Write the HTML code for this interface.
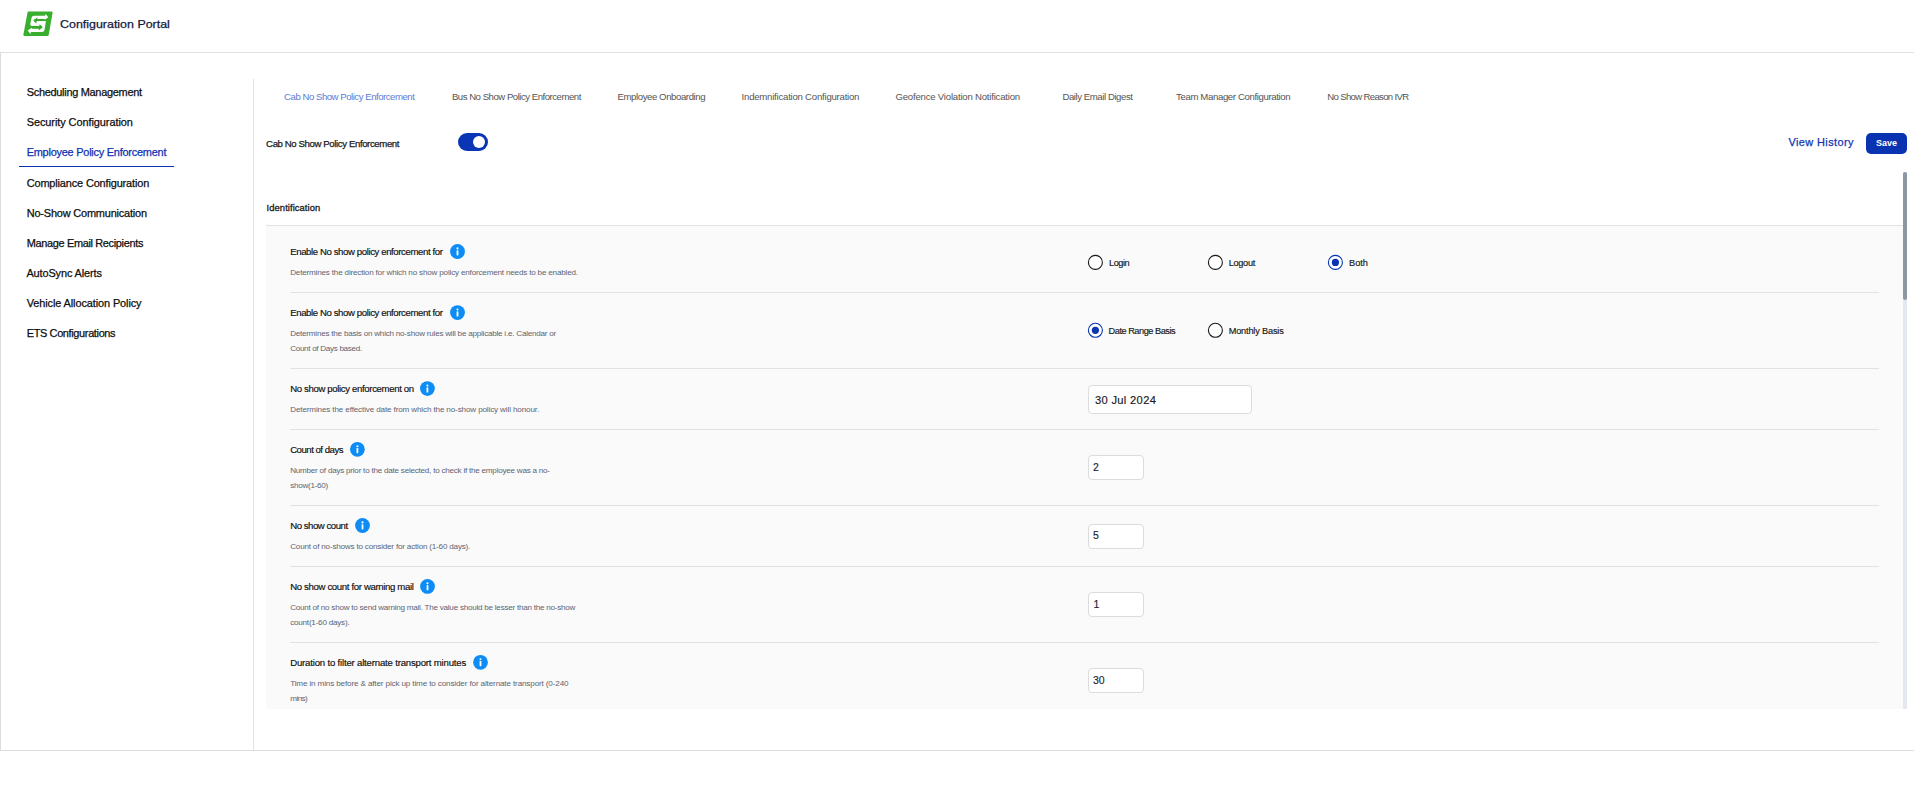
<!DOCTYPE html>
<html><head><meta charset="utf-8"><title>Configuration Portal</title>
<style>
html,body{margin:0;padding:0;background:#fff;width:1914px;height:810px;overflow:hidden;font-family:"Liberation Sans", sans-serif;}
.t{position:absolute;white-space:pre;font-family:"Liberation Sans", sans-serif;}
.a{position:absolute;box-sizing:border-box;}
</style></head><body>
<!-- header border -->
<div class="a" style="left:0;top:52px;width:1914px;height:1px;background:#e0e0e0"></div>
<!-- container left border & bottom border -->
<div class="a" style="left:0;top:52px;width:1px;height:699px;background:#dcdcdc"></div>
<div class="a" style="left:0;top:750px;width:1914px;height:1px;background:#dedede"></div>
<!-- sidebar divider -->
<div class="a" style="left:253px;top:79px;width:1px;height:671px;background:#e2e2e2"></div>
<!-- active underline -->
<div class="a" style="left:19px;top:166px;width:155px;height:1px;background:#0b33b2"></div>
<!-- logo -->
<svg class="a" style="left:20px;top:8px" width="38" height="32" viewBox="20 8 38 32">
  <polygon points="28.7,12.8 51.4,12.8 47.5,34.8 24.6,34.8" fill="#3aae2e" stroke="#3aae2e" stroke-width="2.4" stroke-linejoin="round"/>
  <path d="M34.2,15.8 L45.16,15.8 L45.5,13.9 L48.3,17.3 L44.4,20.0 L44.56,19.1 L34.6,19.1 L34.3,21.1 L45.9,21.1 L44.5,30.0 Q44.2,32.1 42.1,32.1 L30.89,32.1 L30.5,34.0 L27.7,30.5 L31.8,27.7 L31.61,28.6 L41.0,28.6 L41.4,26.1 L32.2,26.1 Q30.0,26.1 30.3,24.0 L31.4,18.2 Q31.9,15.8 34.2,15.8 Z" fill="#fff"/>
  <polygon points="33.2,20.4 37.6,17.3 37.1,19.1 44.3,19.1 44.2,21.1 36.7,21.1 36.3,23.6" fill="#34aa28"/>
  <polygon points="42.8,27.3 39.7,24.2 39.3,26.1 32.5,26.1 32.3,28.6 38.9,28.6 38.5,30.5" fill="#34aa28"/>
</svg>
<!-- toggle -->
<div class="a" style="left:458px;top:133px;width:30px;height:18px;border-radius:9px;background:#0a35b4"></div>
<div class="a" style="left:473px;top:136px;width:12px;height:12px;border-radius:50%;background:#fff"></div>
<!-- save button -->
<div class="a" style="left:1866px;top:133px;width:41px;height:21px;border-radius:5px;background:#0a33b1"></div>
<!-- identification top border -->
<div class="a" style="left:266px;top:225px;width:1637px;height:1px;background:#e2e2e2"></div>
<!-- panel -->
<div class="a" style="left:266px;top:226px;width:1637px;height:483px;background:#fafafa"></div>
<!-- separators -->
<div class="a" style="left:290px;top:292px;width:1589px;height:1px;background:#e2e2e2"></div>
<div class="a" style="left:290px;top:368px;width:1589px;height:1px;background:#e2e2e2"></div>
<div class="a" style="left:290px;top:429px;width:1589px;height:1px;background:#e2e2e2"></div>
<div class="a" style="left:290px;top:505px;width:1589px;height:1px;background:#e2e2e2"></div>
<div class="a" style="left:290px;top:566px;width:1589px;height:1px;background:#e2e2e2"></div>
<div class="a" style="left:290px;top:642px;width:1589px;height:1px;background:#e2e2e2"></div>
<!-- scrollbar -->
<div class="a" style="left:1903px;top:172px;width:4px;height:537px;background:#e5e9ef"></div>
<div class="a" style="left:1903px;top:172px;width:4px;height:128px;border-radius:2px;background:#8d97a4"></div>
<!-- info icons -->
<svg class="a" style="left:0;top:0" width="1914" height="810">
  
  <g transform="translate(457.5,251.5)"><circle cx="0" cy="0" r="7.4" fill="#0d8cf5"/><circle cx="0" cy="-3.1" r="1.05" fill="#fff"/><rect x="-0.9" y="-1.3" width="1.8" height="5.2" rx="0.6" fill="#fff"/></g>
  <g transform="translate(457.5,312.6)"><circle cx="0" cy="0" r="7.4" fill="#0d8cf5"/><circle cx="0" cy="-3.1" r="1.05" fill="#fff"/><rect x="-0.9" y="-1.3" width="1.8" height="5.2" rx="0.6" fill="#fff"/></g>
  <g transform="translate(427.4,388.6)"><circle cx="0" cy="0" r="7.4" fill="#0d8cf5"/><circle cx="0" cy="-3.1" r="1.05" fill="#fff"/><rect x="-0.9" y="-1.3" width="1.8" height="5.2" rx="0.6" fill="#fff"/></g>
  <g transform="translate(357.4,449.3)"><circle cx="0" cy="0" r="7.4" fill="#0d8cf5"/><circle cx="0" cy="-3.1" r="1.05" fill="#fff"/><rect x="-0.9" y="-1.3" width="1.8" height="5.2" rx="0.6" fill="#fff"/></g>
  <g transform="translate(362.5,525.5)"><circle cx="0" cy="0" r="7.4" fill="#0d8cf5"/><circle cx="0" cy="-3.1" r="1.05" fill="#fff"/><rect x="-0.9" y="-1.3" width="1.8" height="5.2" rx="0.6" fill="#fff"/></g>
  <g transform="translate(427.5,586.4)"><circle cx="0" cy="0" r="7.4" fill="#0d8cf5"/><circle cx="0" cy="-3.1" r="1.05" fill="#fff"/><rect x="-0.9" y="-1.3" width="1.8" height="5.2" rx="0.6" fill="#fff"/></g>
  <g transform="translate(480.5,662.3)"><circle cx="0" cy="0" r="7.4" fill="#0d8cf5"/><circle cx="0" cy="-3.1" r="1.05" fill="#fff"/><rect x="-0.9" y="-1.3" width="1.8" height="5.2" rx="0.6" fill="#fff"/></g>
  <!-- radios -->
  <circle cx="1095.4" cy="262.4" r="7" fill="#fff" stroke="#1a1a1a" stroke-width="1.1"/>
  <circle cx="1215.4" cy="262.4" r="7" fill="#fff" stroke="#1a1a1a" stroke-width="1.1"/>
  <circle cx="1335.4" cy="262.4" r="7" fill="#fff" stroke="#0a34b2" stroke-width="1.1"/>
  <circle cx="1335.4" cy="262.4" r="3.6" fill="#0a34b2"/>
  <circle cx="1095.4" cy="330.3" r="7" fill="#fff" stroke="#0a34b2" stroke-width="1.1"/>
  <circle cx="1095.4" cy="330.3" r="3.6" fill="#0a34b2"/>
  <circle cx="1215.4" cy="330.3" r="7" fill="#fff" stroke="#1a1a1a" stroke-width="1.1"/>
</svg>
<!-- inputs -->
<div class="a" style="left:1088px;top:385px;width:164px;height:29px;border:1px solid #dcdcdc;border-radius:4px;background:#fff"></div>
<div class="a" style="left:1088px;top:455px;width:56px;height:25px;border:1px solid #dcdcdc;border-radius:4px;background:#fff"></div>
<div class="a" style="left:1088px;top:524px;width:56px;height:25px;border:1px solid #dcdcdc;border-radius:4px;background:#fff"></div>
<div class="a" style="left:1088px;top:592px;width:56px;height:25px;border:1px solid #dcdcdc;border-radius:4px;background:#fff"></div>
<div class="a" style="left:1088px;top:668px;width:56px;height:25px;border:1px solid #dcdcdc;border-radius:4px;background:#fff"></div>

<span class="t" style="left:59.50px;top:18.80px;font-size:10.95px;line-height:10.95px;color:#141a3c;transform:scaleX(1.1367);transform-origin:0 0;-webkit-text-stroke:0.25px currentColor;">Configuration Portal</span>
<span class="t" style="left:26.70px;top:86.60px;font-size:10.95px;line-height:10.95px;color:#0d0d0d;letter-spacing:-0.283px;-webkit-text-stroke:0.25px currentColor;">Scheduling Management</span>
<span class="t" style="left:26.70px;top:116.60px;font-size:10.95px;line-height:10.95px;color:#0d0d0d;letter-spacing:-0.068px;-webkit-text-stroke:0.25px currentColor;">Security Configuration</span>
<span class="t" style="left:26.70px;top:146.90px;font-size:10.95px;line-height:10.95px;color:#0d32b2;letter-spacing:-0.237px;-webkit-text-stroke:0.25px currentColor;">Employee Policy Enforcement</span>
<span class="t" style="left:26.70px;top:177.90px;font-size:10.95px;line-height:10.95px;color:#0d0d0d;letter-spacing:-0.142px;-webkit-text-stroke:0.25px currentColor;">Compliance Configuration</span>
<span class="t" style="left:26.70px;top:207.70px;font-size:10.95px;line-height:10.95px;color:#0d0d0d;letter-spacing:-0.181px;-webkit-text-stroke:0.25px currentColor;">No-Show Communication</span>
<span class="t" style="left:26.70px;top:237.70px;font-size:10.95px;line-height:10.95px;color:#0d0d0d;letter-spacing:-0.334px;-webkit-text-stroke:0.25px currentColor;">Manage Email Recipients</span>
<span class="t" style="left:26.40px;top:267.90px;font-size:10.95px;line-height:10.95px;color:#0d0d0d;letter-spacing:-0.117px;-webkit-text-stroke:0.25px currentColor;">AutoSync Alerts</span>
<span class="t" style="left:26.70px;top:297.70px;font-size:10.95px;line-height:10.95px;color:#0d0d0d;letter-spacing:-0.103px;-webkit-text-stroke:0.25px currentColor;">Vehicle Allocation Policy</span>
<span class="t" style="left:26.70px;top:327.70px;font-size:10.95px;line-height:10.95px;color:#0d0d0d;letter-spacing:-0.351px;-webkit-text-stroke:0.25px currentColor;">ETS Configurations</span>
<span class="t" style="left:284.10px;top:91.90px;font-size:9.6px;line-height:9.6px;color:#5a7bd6;letter-spacing:-0.474px;">Cab No Show Policy Enforcement</span>
<span class="t" style="left:451.90px;top:91.90px;font-size:9.6px;line-height:9.6px;color:#555555;letter-spacing:-0.482px;">Bus No Show Policy Enforcement</span>
<span class="t" style="left:617.50px;top:91.90px;font-size:9.6px;line-height:9.6px;color:#555555;letter-spacing:-0.413px;">Employee Onboarding</span>
<span class="t" style="left:741.60px;top:91.90px;font-size:9.6px;line-height:9.6px;color:#555555;letter-spacing:-0.229px;">Indemnification Configuration</span>
<span class="t" style="left:895.50px;top:91.90px;font-size:9.6px;line-height:9.6px;color:#555555;letter-spacing:-0.213px;">Geofence Violation Notification</span>
<span class="t" style="left:1062.40px;top:91.90px;font-size:9.6px;line-height:9.6px;color:#555555;letter-spacing:-0.428px;">Daily Email Digest</span>
<span class="t" style="left:1176.10px;top:91.90px;font-size:9.6px;line-height:9.6px;color:#555555;letter-spacing:-0.371px;">Team Manager Configuration</span>
<span class="t" style="left:1327.30px;top:91.90px;font-size:9.6px;line-height:9.6px;color:#555555;letter-spacing:-0.676px;">No Show Reason IVR</span>
<span class="t" style="left:266.10px;top:138.80px;font-size:9.6px;line-height:9.6px;color:#1a1a1a;letter-spacing:-0.384px;-webkit-text-stroke:0.25px #1a1a1a;">Cab No Show Policy Enforcement</span>
<span class="t" style="left:1788.40px;top:136.80px;font-size:10.95px;line-height:10.95px;color:#1236b3;letter-spacing:0.417px;-webkit-text-stroke:0.25px currentColor;">View History</span>
<span class="t" style="left:1876.20px;top:138.00px;font-size:9.8px;line-height:9.8px;color:#ffffff;font-weight:700;transform:scaleX(0.9176);transform-origin:0 0;">Save</span>
<span class="t" style="left:266.60px;top:202.80px;font-size:9.4px;line-height:9.4px;color:#1a1a1a;letter-spacing:0.075px;-webkit-text-stroke:0.3px #1a1a1a;">Identification</span>
<span class="t" style="left:290.20px;top:246.90px;font-size:9.6px;line-height:9.6px;color:#0c0c0c;letter-spacing:-0.395px;-webkit-text-stroke:0.15px currentColor;">Enable No show policy enforcement for</span>
<span class="t" style="left:290.20px;top:268.90px;font-size:8.1px;line-height:8.1px;color:#5d6472;letter-spacing:-0.184px;">Determines the direction for which no show policy enforcement needs to be enabled.</span>
<span class="t" style="left:290.20px;top:307.90px;font-size:9.6px;line-height:9.6px;color:#0c0c0c;letter-spacing:-0.395px;-webkit-text-stroke:0.15px currentColor;">Enable No show policy enforcement for</span>
<span class="t" style="left:290.20px;top:329.90px;font-size:8.1px;line-height:8.1px;color:#5d6472;letter-spacing:-0.228px;">Determines the basis on which no-show rules will be applicable i.e. Calendar or</span>
<span class="t" style="left:290.20px;top:344.90px;font-size:8.1px;line-height:8.1px;color:#5d6472;letter-spacing:-0.310px;">Count of Days based.</span>
<span class="t" style="left:290.20px;top:384.00px;font-size:9.6px;line-height:9.6px;color:#0c0c0c;letter-spacing:-0.354px;-webkit-text-stroke:0.15px currentColor;">No show policy enforcement on</span>
<span class="t" style="left:290.20px;top:406.00px;font-size:8.1px;line-height:8.1px;color:#5d6472;letter-spacing:-0.135px;">Determines the effective date from which the no-show policy will honour.</span>
<span class="t" style="left:290.20px;top:444.80px;font-size:9.6px;line-height:9.6px;color:#0c0c0c;letter-spacing:-0.492px;-webkit-text-stroke:0.15px currentColor;">Count of days</span>
<span class="t" style="left:290.20px;top:466.80px;font-size:8.1px;line-height:8.1px;color:#5d6472;letter-spacing:-0.233px;">Number of days prior to the date selected, to check if the employee was a no-</span>
<span class="t" style="left:290.20px;top:481.80px;font-size:8.1px;line-height:8.1px;color:#5d6472;letter-spacing:-0.265px;">show(1-60)</span>
<span class="t" style="left:290.20px;top:520.80px;font-size:9.6px;line-height:9.6px;color:#0c0c0c;letter-spacing:-0.466px;-webkit-text-stroke:0.15px currentColor;">No show count</span>
<span class="t" style="left:290.20px;top:542.80px;font-size:8.1px;line-height:8.1px;color:#5d6472;letter-spacing:-0.195px;">Count of no-shows to consider for action (1-60 days).</span>
<span class="t" style="left:290.20px;top:582.00px;font-size:9.6px;line-height:9.6px;color:#0c0c0c;letter-spacing:-0.349px;-webkit-text-stroke:0.15px currentColor;">No show count for warning mail</span>
<span class="t" style="left:290.20px;top:604.00px;font-size:8.1px;line-height:8.1px;color:#5d6472;letter-spacing:-0.243px;">Count of no show to send warning mail. The value should be lesser than the no-show</span>
<span class="t" style="left:290.20px;top:619.00px;font-size:8.1px;line-height:8.1px;color:#5d6472;letter-spacing:-0.221px;">count(1-60 days).</span>
<span class="t" style="left:290.20px;top:657.80px;font-size:9.6px;line-height:9.6px;color:#0c0c0c;letter-spacing:-0.187px;-webkit-text-stroke:0.15px currentColor;">Duration to filter alternate transport minutes</span>
<span class="t" style="left:290.20px;top:679.80px;font-size:8.1px;line-height:8.1px;color:#5d6472;letter-spacing:-0.135px;">Time in mins before &amp; after pick up time to consider for alternate transport (0-240</span>
<span class="t" style="left:290.20px;top:694.80px;font-size:8.1px;line-height:8.1px;color:#5d6472;letter-spacing:-0.547px;">mins)</span>
<span class="t" style="left:1109.00px;top:258.70px;font-size:9.2px;line-height:9.2px;color:#141414;letter-spacing:-0.443px;-webkit-text-stroke:0.15px currentColor;">Login</span>
<span class="t" style="left:1228.70px;top:258.80px;font-size:9.2px;line-height:9.2px;color:#141414;letter-spacing:-0.310px;-webkit-text-stroke:0.15px currentColor;">Logout</span>
<span class="t" style="left:1349.00px;top:258.80px;font-size:9.2px;line-height:9.2px;color:#141414;letter-spacing:0.003px;-webkit-text-stroke:0.15px currentColor;">Both</span>
<span class="t" style="left:1108.60px;top:326.80px;font-size:9.2px;line-height:9.2px;color:#141414;letter-spacing:-0.471px;-webkit-text-stroke:0.15px currentColor;">Date Range Basis</span>
<span class="t" style="left:1228.70px;top:326.80px;font-size:9.2px;line-height:9.2px;color:#141414;letter-spacing:-0.175px;-webkit-text-stroke:0.15px currentColor;">Monthly Basis</span>
<span class="t" style="left:1094.90px;top:394.90px;font-size:11.2px;line-height:11.2px;color:#1a1a1a;letter-spacing:0.317px;-webkit-text-stroke:0.15px currentColor;">30 Jul 2024</span>
<span class="t" style="left:1093.00px;top:462.00px;font-size:10.5px;line-height:10.5px;color:#1b1f36;-webkit-text-stroke:0.15px currentColor;">2</span>
<span class="t" style="left:1093.00px;top:530.00px;font-size:10.5px;line-height:10.5px;color:#1b1f36;-webkit-text-stroke:0.15px currentColor;">5</span>
<span class="t" style="left:1093.40px;top:599.00px;font-size:10.5px;line-height:10.5px;color:#1b1f36;-webkit-text-stroke:0.15px currentColor;">1</span>
<span class="t" style="left:1093.00px;top:675.00px;font-size:10.5px;line-height:10.5px;color:#1b1f36;-webkit-text-stroke:0.15px currentColor;">30</span>
</body></html>
